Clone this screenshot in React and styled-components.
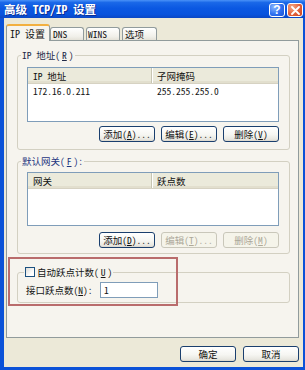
import React from "react";
import styled, { createGlobalStyle } from "styled-components";

const FONT = `"Noto Sans Mono CJK SC", "Liberation Mono", "Noto Sans CJK SC", monospace`;
const PANEL_BG = "#F6F4EE";

const Global = createGlobalStyle`
  html, body { margin: 0; padding: 0; background: #ECE9D8; }
  body { font-family: ${FONT}; font-size: 9.5px; color: #141414; }
  * { box-sizing: border-box; }
`;

const Window = styled.div`
  position: relative;
  width: 305px;
  height: 370px;
  display: flex;
  flex-direction: column;
  overflow: hidden;
`;

const TitleBar = styled.div`
  height: 18px;
  flex: none;
  display: flex;
  align-items: flex-start;
  padding: 0 2px 0 4px;
  background: linear-gradient(#4a92f8 0%, #1a68e8 14%, #0b58e2 45%, #0853dd 80%, #0a47c4 100%);
`;

const Title = styled.div`
  flex: 1;
  color: #fff;
  font-weight: 700;
  font-size: 11.5px;
  line-height: 18px;
  white-space: nowrap;
  text-shadow: 1px 1px 0 #0b2f94;
`;

const CaptionButton = styled.div`
  width: 16px;
  height: 14px;
  margin-top: 3px;
  margin-left: ${(p) => (p.$gap ? 2 : 0)}px;
  border: 1px solid #fff;
  border-radius: 3px;
  display: flex;
  align-items: center;
  justify-content: center;
  color: #fff;
  font-family: "Liberation Sans", sans-serif;
  font-weight: 700;
  font-size: 12px;
  line-height: 1;
  background: ${(p) =>
    p.$close
      ? "radial-gradient(circle at 30% 25%, #f4a784, #e2603a 55%, #c9431f)"
      : "radial-gradient(circle at 30% 25%, #8ab8ff, #2e6ff0 55%, #1b52d2)"};
`;

const Frame = styled.div`
  flex: 1;
  display: flex;
  flex-direction: column;
  background: #ece9d8;
  border-style: solid;
  border-color: #0b52d8;
  border-width: 0 2px 3px 4px;
  padding: 6px 4px 0 2px;
`;

const TabRow = styled.div`
  display: flex;
  align-items: flex-end;
  height: 17px;
  margin-bottom: -1px;
  position: relative;
  z-index: 1;
`;

const Tab = styled.div`
  width: ${(p) => p.$w}px;
  height: ${(p) => (p.$active ? 17 : 13)}px;
  margin-right: ${(p) => p.$mr}px;
  margin-bottom: ${(p) => (p.$active ? 0 : 1)}px;
  padding-left: ${(p) => p.$pl}px;
  border: 1px solid #919b9c;
  border-bottom: none;
  border-top: ${(p) => (p.$active ? "2px solid #f2b040" : "1px solid #919b9c")};
  border-radius: 3px 3px 0 0;
  background: ${(p) => (p.$active ? PANEL_BG : "linear-gradient(#ffffff, #f1f0ea 70%, #e4e2d8)")};
  display: flex;
  align-items: center;
  font-size: ${(p) => (p.$active ? 10 : 9.5)}px;
  white-space: nowrap;
`;

const Panel = styled.div`
  height: 298px;
  flex: none;
  border: 1px solid #919b9c;
  background: ${PANEL_BG};
  display: flex;
  flex-direction: column;
  padding: 0 8px 0 10px;
`;

const Group = styled.div`
  position: relative;
  margin-top: ${(p) => p.$mt}px;
  border: 1px solid #d3d0c2;
  border-radius: 3px;
  padding: ${(p) => p.$pad};
  display: flex;
  flex-direction: column;
`;

const GroupCaption = styled.div`
  position: absolute;
  top: -7px;
  left: ${(p) => p.$left}px;
  padding: 0 1px;
  height: 12px;
  background: ${PANEL_BG};
  color: ${(p) => p.$color || "#1e347e"};
  display: flex;
  align-items: center;
  gap: 2px;
  line-height: 12px;
  white-space: nowrap;
`;

const Mn = styled.span`
  text-decoration: underline;
  text-underline-offset: 1px;
`;

const List = styled.div`
  height: ${(p) => p.$h}px;
  border: 1px solid #7f9db9;
  background: #fff;
  display: flex;
  flex-direction: column;
`;

const ListHeader = styled.div`
  display: grid;
  grid-template-columns: 124px 1fr;
  height: 16px;
  background: #ebeadb;
  border-bottom: 1px solid #d6d2c2;
  box-shadow: inset 0 -2px 0 #e2dfce;
`;

const HeaderCell = styled.div`
  display: flex;
  align-items: center;
  padding-left: 5px;
  color: #111;
  border-right: ${(p) => (p.$divider ? "1px solid #c7c5b2" : "none")};
  box-shadow: ${(p) => (p.$divider ? "1px 0 0 #fff" : "none")};
`;

const ListRow = styled.div`
  display: grid;
  grid-template-columns: 124px 1fr;
  height: 13px;
  align-items: center;
`;

const Cell = styled.div`
  padding-left: ${(p) => p.$pl}px;
  white-space: nowrap;
`;

const ButtonRow = styled.div`
  display: flex;
  justify-content: flex-end;
  gap: ${(p) => p.$gap}px;
  margin-top: ${(p) => p.$mt}px;
`;

const Button = styled.button`
  width: 56px;
  height: 16px;
  padding: 0;
  font-family: ${FONT};
  font-size: 9.5px;
  color: ${(p) => (p.disabled ? "#aca899" : "#111")};
  border: 1px solid ${(p) => (p.disabled ? "#c9c7ba" : "#1a3f6e")};
  border-radius: 3px;
  background: ${(p) =>
    p.disabled ? "#f5f4ea" : "linear-gradient(#ffffff, #f6f6f2 55%, #e8e7e0 88%, #d9d5ca)"};
  white-space: nowrap;
  display: flex;
  align-items: center;
  justify-content: center;
`;

const Checkbox = styled.span`
  width: 10px;
  height: 10px;
  border: 1px solid #1c5180;
  background: linear-gradient(135deg, #dcdcd7, #ffffff 70%);
  display: inline-block;
  flex: none;
`;

const FieldRow = styled.div`
  display: grid;
  grid-template-columns: 74px 58px;
  align-items: center;
  height: 16px;
`;

const TextInput = styled.div`
  height: 16px;
  border: 1px solid #7f9db9;
  background: #fff;
  padding-left: 3px;
  display: flex;
  align-items: center;
`;

const Footer = styled.div`
  display: flex;
  justify-content: flex-end;
  gap: 7px;
  margin-top: 8px;
`;

const Annotation = styled.div`
  position: absolute;
  left: 8px;
  top: 257px;
  width: 170px;
  height: 49px;
  border: 2px solid #b96c6c;
  pointer-events: none;
`;

export default function App() {
  return (
    <>
      <Global />
      <Window>
        <TitleBar>
          <Title>高级 TCP/IP 设置</Title>
          <CaptionButton>?</CaptionButton>
          <CaptionButton $close $gap>
            <svg width="9" height="9" viewBox="0 0 9 9">
              <path d="M1 1 L8 8 M8 1 L1 8" stroke="#fff" strokeWidth="1.8" strokeLinecap="round" />
            </svg>
          </CaptionButton>
        </TitleBar>
        <Frame>
          <TabRow>
            <Tab $active $w={44} $mr={0} $pl={3}>IP 设置</Tab>
            <Tab $w={34} $mr={2} $pl={2}>DNS</Tab>
            <Tab $w={34} $mr={2} $pl={1}>WINS</Tab>
            <Tab $w={35} $mr={0} $pl={2}>选项</Tab>
          </TabRow>
          <Panel>
            <Group $mt={14} $pad="11px 10px 7px 9px">
              <GroupCaption $left={3} $color="#222a48">
                IP 地址(<Mn>R</Mn>)
              </GroupCaption>
              <List $h={55}>
                <ListHeader>
                  <HeaderCell $divider>IP 地址</HeaderCell>
                  <HeaderCell>子网掩码</HeaderCell>
                </ListHeader>
                <ListRow>
                  <Cell $pl={5}>172.16.0.211</Cell>
                  <Cell $pl={5}>255.255.255.0</Cell>
                </ListRow>
              </List>
              <ButtonRow $gap={6} $mt={4}>
                <Button>添加(<Mn>A</Mn>)...</Button>
                <Button>编辑(<Mn>E</Mn>)...</Button>
                <Button>删除(<Mn>V</Mn>)</Button>
              </ButtonRow>
            </Group>

            <Group $mt={11} $pad="10px 10px 5px 9px">
              <GroupCaption $left={3}>
                默认网关(<Mn>F</Mn>):
              </GroupCaption>
              <List $h={54}>
                <ListHeader>
                  <HeaderCell $divider>网关</HeaderCell>
                  <HeaderCell>跃点数</HeaderCell>
                </ListHeader>
              </List>
              <ButtonRow $gap={6} $mt={6}>
                <Button>添加(<Mn>D</Mn>)...</Button>
                <Button disabled>编辑(<Mn>T</Mn>)...</Button>
                <Button disabled>删除(<Mn>M</Mn>)</Button>
              </ButtonRow>
            </Group>

            <Group $mt={18} $pad="9px 10px 4px 8px">
              <GroupCaption $left={6} $color="#141414">
                <Checkbox />
                自动跃点计数(<Mn>U</Mn>)
              </GroupCaption>
              <FieldRow>
                <span>接口跃点数(<Mn>N</Mn>):</span>
                <TextInput>1</TextInput>
              </FieldRow>
            </Group>
          </Panel>
          <Footer>
            <Button>确定</Button>
            <Button>取消</Button>
          </Footer>
        </Frame>
        <Annotation />
      </Window>
    </>
  );
}
